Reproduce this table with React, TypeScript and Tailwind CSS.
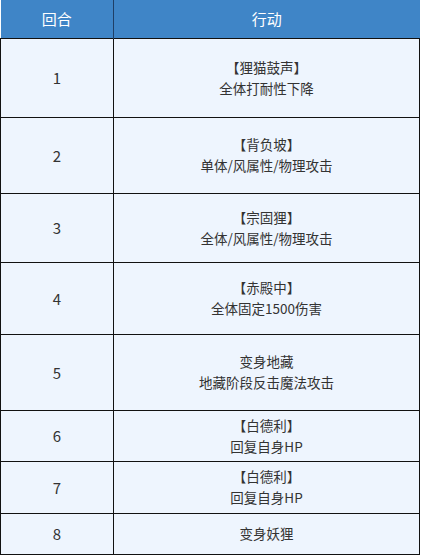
const rows: { n: number; h: number; lines: string[] }[] = [
  { n: 1, h: 79, lines: ["【狸猫鼓声】", "全体打耐性下降"] },
  { n: 2, h: 76, lines: ["【背负坡】", "单体/风属性/物理攻击"] },
  { n: 3, h: 69, lines: ["【宗固狸】", "全体/风属性/物理攻击"] },
  { n: 4, h: 72, lines: ["【赤殿中】", "全体固定1500伤害"] },
  { n: 5, h: 76, lines: ["变身地藏", "地藏阶段反击魔法攻击"] },
  { n: 6, h: 51, lines: ["【白德利】", "回复自身HP"] },
  { n: 7, h: 52, lines: ["【白德利】", "回复自身HP"] },
  { n: 8, h: 41, lines: ["变身妖狸"] },
]

export default function App() {
  return (
    <div
      className="w-[425px] h-[555px] bg-white"
      style={{ fontFamily: '"Microsoft YaHei", "Noto Sans CJK SC", "Noto Sans", sans-serif' }}
    >
      <table className="w-[420px] border-collapse table-fixed">
        <thead>
          <tr className="h-[38px] bg-[#3f85c7] text-white text-[15px]">
            <th className="w-[113px] font-normal border-r border-[#1f3f66]">回合</th>
            <th className="font-normal">行动</th>
          </tr>
        </thead>
        <tbody className="bg-[#eef5fe] text-[#333] text-[13.5px] leading-[21px]">
          {rows.map((r) => (
            <tr key={r.n} style={{ height: r.h }}>
              <td className="border border-[#111] text-center text-[15px]">{r.n}</td>
              <td className="border border-[#111] text-center">
                {r.lines.map((l, i) => (
                  <div key={i}>{l}</div>
                ))}
              </td>
            </tr>
          ))}
        </tbody>
      </table>
    </div>
  )
}
